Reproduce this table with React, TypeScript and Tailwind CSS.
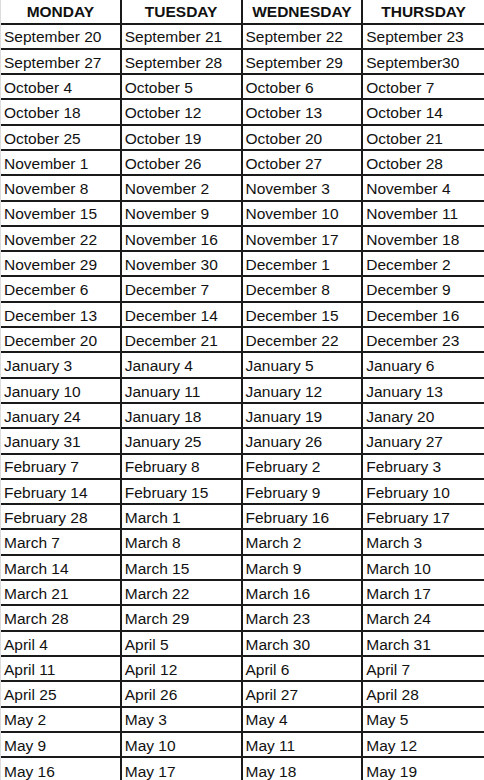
import React from "react";

const DAYS = ["MONDAY", "TUESDAY", "WEDNESDAY", "THURSDAY"] as const;

const ROWS: string[][] = [
  ["September 20", "September 21", "September 22", "September 23"],
  ["September 27", "September 28", "September 29", "September30"],
  ["October 4", "October 5", "October 6", "October 7"],
  ["October 18", "October 12", "October 13", "October 14"],
  ["October 25", "October 19", "October 20", "October 21"],
  ["November 1", "October 26", "October 27", "October 28"],
  ["November 8", "November 2", "November 3", "November 4"],
  ["November 15", "November 9", "November 10", "November 11"],
  ["November 22", "November 16", "November 17", "November 18"],
  ["November 29", "November 30", "December 1", "December 2"],
  ["December 6", "December 7", "December 8", "December 9"],
  ["December 13", "December 14", "December 15", "December 16"],
  ["December 20", "December 21", "December 22", "December 23"],
  ["January 3", "Janaury 4", "January 5", "January 6"],
  ["January 10", "January 11", "January 12", "January 13"],
  ["January 24", "January 18", "January 19", "Janary 20"],
  ["January 31", "January 25", "January 26", "January 27"],
  ["February 7", "February 8", "February 2", "February 3"],
  ["February 14", "February 15", "February 9", "February 10"],
  ["February 28", "March 1", "February 16", "February 17"],
  ["March 7", "March 8", "March 2", "March 3"],
  ["March 14", "March 15", "March 9", "March 10"],
  ["March 21", "March 22", "March 16", "March 17"],
  ["March 28", "March 29", "March 23", "March 24"],
  ["April 4", "April 5", "March 30", "March 31"],
  ["April 11", "April 12", "April 6", "April 7"],
  ["April 25", "April 26", "April 27", "April 28"],
  ["May 2", "May 3", "May 4", "May 5"],
  ["May 9", "May 10", "May 11", "May 12"],
  ["May 16", "May 17", "May 18", "May 19"],
];

const App: React.FC = () => {
  return (
    <div
      className="w-[484px] h-[780px] bg-white text-[#111] flex flex-col overflow-hidden border-l border-[#dcdcdc]"
      style={{ fontFamily: '"Liberation Sans", Arial, sans-serif' }}
    >
      <div className="h-[24.5px] shrink-0 grid grid-cols-4 border-b-2 border-[#1a1a1a] leading-none">
        {DAYS.map((day, i) => (
          <div
            key={day}
            className={`flex items-center justify-center font-bold text-[15.5px] pt-[1px] ${
              i < 3 ? "border-r-2 border-[#1a1a1a]" : ""
            }`}
          >
            {day}
          </div>
        ))}
      </div>
      {ROWS.map((row, r) => (
        <div
          key={r}
          className={`h-[25.3px] shrink-0 grid grid-cols-4 leading-none ${
            r < ROWS.length - 1 ? "border-b-2 border-[#1a1a1a]" : ""
          }`}
        >
          {row.map((cell, i) => (
            <div
              key={i}
              className={`flex items-center pl-[3px] pt-[2px] text-[15.5px] whitespace-nowrap ${
                i < 3 ? "border-r-2 border-[#1a1a1a]" : ""
              }`}
            >
              {cell}
            </div>
          ))}
        </div>
      ))}
    </div>
  );
};

export default App;
